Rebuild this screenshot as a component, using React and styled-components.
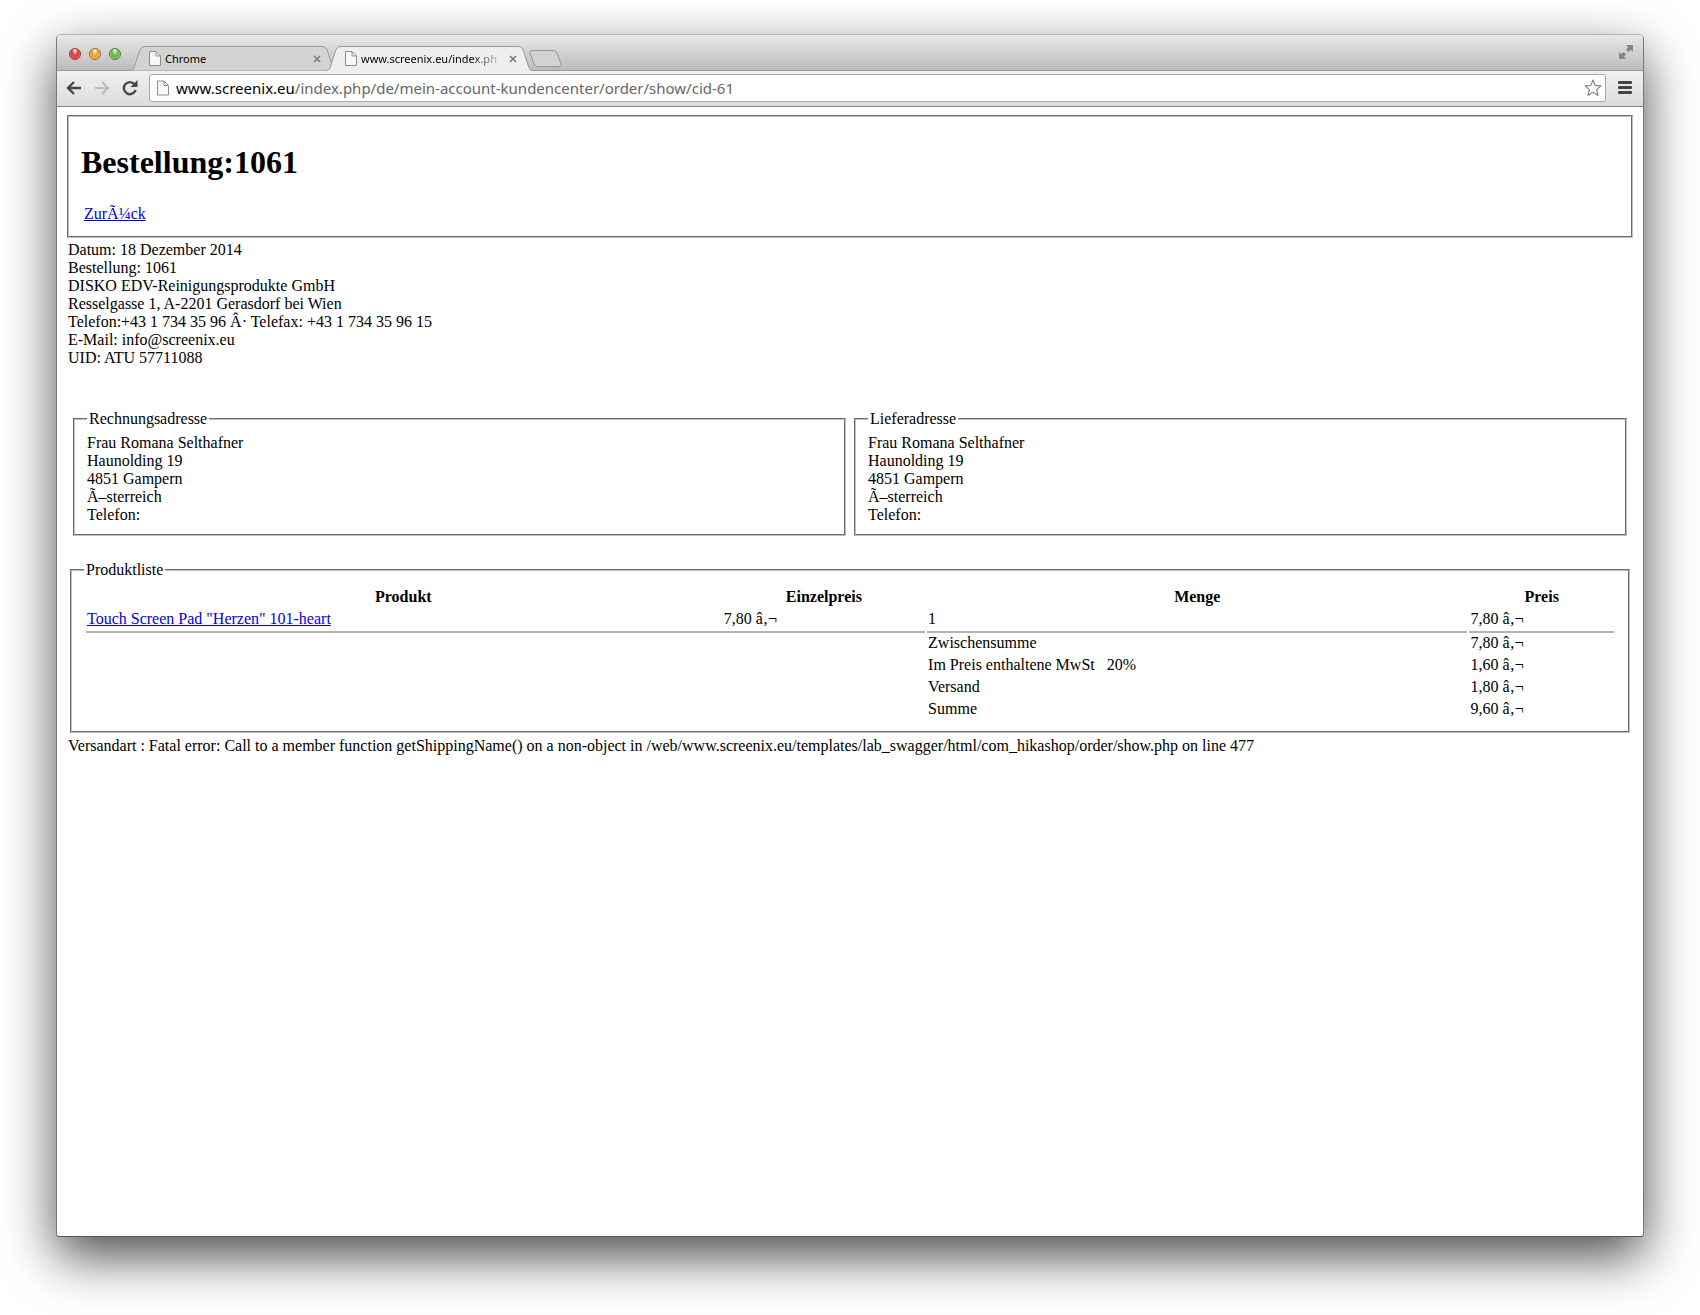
import React from "react";
import styled, { createGlobalStyle } from "styled-components";

const Global = createGlobalStyle`
  *, *::before, *::after { box-sizing: border-box; }
  body { margin: 0; background: #fff; }
`;

const Desktop = styled.div`
  min-height: 100vh;
  padding: 34px 56px 78px;
  display: flex;
  background: #fff;
`;

const BrowserWindow = styled.div`
  flex: 1;
  min-width: 0;
  display: flex;
  flex-direction: column;
  border: 1px solid #777;
  border-top-color: #b4b4b4;
  border-bottom-color: #555;
  border-radius: 5px 5px 3px 3px;
  background: #fff;
  box-shadow: 0 20px 52px rgba(0, 0, 0, 0.7);
`;

const TitleBar = styled.div`
  height: 36px;
  display: flex;
  align-items: flex-end;
  padding: 0 10px 0 12px;
  border-radius: 4px 4px 0 0;
  border-bottom: 1px solid #999;
  background: linear-gradient(#e8e8e8, #bcbcbc);
`;

const Lights = styled.div`
  display: flex;
  gap: 8px;
  margin-bottom: 10px;
`;

const Light = styled.button`
  width: 12px;
  height: 12px;
  padding: 0;
  border: 1px solid ${(p) => p.$edge};
  border-radius: 50%;
  background: radial-gradient(ellipse at 50% 15%, #fff 0, ${(p) => p.$fill} 40%, ${(p) => p.$fill} 60%, ${(p) => p.$glow} 100%);
`;

const Tabs = styled.div`
  display: flex;
  align-items: flex-end;
  margin-left: 10px;
`;

const Tab = styled.div`
  position: relative;
  width: 205px;
  height: 25px;
  margin-right: -9px;
  margin-bottom: -1px;
  padding: 0 15px 0 18px;
  display: flex;
  align-items: center;
  gap: 4px;
  z-index: ${(p) => (p.$active ? 2 : 1)};
  font: 11px/16px "Noto Sans", sans-serif;
  color: #000;
`;

const TabShape = styled.svg`
  position: absolute;
  inset: 0;
  width: 100%;
  height: 100%;
`;

const TabTitle = styled.span`
  position: relative;
  flex: 1;
  min-width: 0;
  overflow: hidden;
  white-space: nowrap;
  ${(p) => p.$fade && "mask-image: linear-gradient(90deg, #000 76%, transparent);"}
`;

const IconButton = styled.button`
  position: relative;
  flex: none;
  display: flex;
  padding: 0;
  border: 0;
  background: none;
`;

const PageIcon = styled.svg`
  position: relative;
  flex: none;
`;

const NewTab = styled(IconButton)`
  margin: 0 0 3px 6px;
`;

const FullScreen = styled(IconButton)`
  margin: 0 0 11px auto;
`;

const Toolbar = styled.div`
  height: 36px;
  display: flex;
  align-items: center;
  padding: 0 11px 1px 9px;
  border-bottom: 1px solid #858585;
  background: linear-gradient(#f0f0f0, #dcdcdc);
`;

const Nav = styled.div`
  display: flex;
  gap: 12px;
`;

const AddressBar = styled.div`
  position: relative;
  flex: 1;
  height: 28px;
  margin: 0 12px 0 11px;
  padding: 0 3px 0 7px;
  display: flex;
  align-items: center;
  gap: 7px;
  border: 1px solid #a8a8a8;
  border-radius: 3px;
  background: #fff;
`;

const Address = styled.a`
  flex: 1;
  font: 15px/20px "Noto Sans", sans-serif;
  color: #666;
  text-decoration: none;
  white-space: nowrap;
`;

const Host = styled.span`
  color: #000;
`;

const Page = styled.main`
  flex: 1;
  padding: 8px;
  font: 16px/18px "Liberation Serif", "Times New Roman", serif;
  color: #000;
`;

const Group = styled.fieldset`
  min-width: 0;
  margin: 0;
  padding: 6px 12px 10px;
  border: 2px groove #c0c0c0;
`;

const Heading = styled(Group)`
  margin: 0 2px;
`;

const Title = styled.h1`
  margin: 21px 0 25px;
  font-size: 32px;
  line-height: 36px;
`;

const Link = styled.a`
  color: #0000ee;
`;

const BackRow = styled.div`
  padding: 0 3px 3px;
`;

const Sender = styled.div`
  margin: 3px 3px 0;
`;

const Addresses = styled.div`
  display: grid;
  grid-template-columns: 1fr 1fr;
  gap: 8px;
  margin: 43px 8px 25px;
`;

const Products = styled(Group)`
  margin: 0 5px;
`;

const Legend = styled.legend`
  padding: 0 2px;
`;

const Table = styled.table`
  width: 100%;
  border-collapse: separate;
  border-spacing: 2px;
  table-layout: fixed;
`;

const Col = styled.col`
  width: ${(p) => p.$w};
`;

const Th = styled.th`
  padding: 1px;
`;

const Td = styled.td`
  padding: 1px;
  white-space: pre;
`;

/* The rule is drawn over the spacing below the row; $bridge carries it across to the next cell. */
const RuledTd = styled(Td)`
  position: relative;
  padding-bottom: 3px;

  &::after {
    content: "";
    position: absolute;
    left: 0;
    right: ${(p) => (p.$bridge ? "-2px" : "0")};
    bottom: -2px;
    height: 2px;
    background: #b4b4b4;
  }
`;

const ErrorLine = styled.div`
  margin: 4px 3px 0;
`;

const sender = [
  "Datum: 18 Dezember 2014",
  "Bestellung: 1061",
  "DISKO EDV-Reinigungsprodukte GmbH",
  "Resselgasse 1, A-2201 Gerasdorf bei Wien",
  "Telefon:+43 1 734 35 96 Â· Telefax: +43 1 734 35 96 15",
  "E-Mail: info@screenix.eu",
  "UID: ATU 57711088",
];

const customer = ["Frau Romana Selthafner", "Haunolding 19", "4851 Gampern", "Ã–sterreich", "Telefon:"];

const totals = [
  ["Zwischensumme", "7,80 â‚¬"],
  ["Im Preis enthaltene MwSt   20%", "1,60 â‚¬"],
  ["Versand", "1,80 â‚¬"],
  ["Summe", "9,60 â‚¬"],
];

const Doc = ({ w = 12, h = 15 }) => (
  <PageIcon width={w} height={h} viewBox="0 0 12 15">
    <path d="M.5.5h6.5l4.500 4.500v9.500H.5z" fill="#f8f8f8" stroke="#8c8c8c" />
    <path d="M7 .5V5h4.500" fill="none" stroke="#8c8c8c" />
  </PageIcon>
);

function BrowserTab({ title, active }) {
  const fill = active ? "#efefef" : "#d3d3d3";
  return (
    <Tab $active={active}>
      <TabShape viewBox="0 0 205 25">
        <path
          d="M0 24.500C2.500 24.500 3 22 4 19L8.500 5Q10 .5 14 .5H191Q195 .5 196.500 5L201 19Q202.500 24.500 205 24.500"
          fill={fill}
          stroke="#999"
        />
        {active && <path d="M1 24.500H204" stroke="#efefef" />}
      </TabShape>
      <Doc />
      <TabTitle $fade={active}>{title}</TabTitle>
      <IconButton aria-label="Tab schließen">
        <svg width="8" height="8" viewBox="0 0 8 8">
          <path d="M1 1l6 6M7 1L1 7" stroke="#777" strokeWidth="1.500" />
        </svg>
      </IconButton>
    </Tab>
  );
}

function AddressBox({ title }) {
  return (
    <Group>
      <Legend>{title}</Legend>
      {customer.map((line) => (
        <div key={line}>{line}</div>
      ))}
    </Group>
  );
}

export default function App() {
  return (
    <Desktop>
      <Global />
      <BrowserWindow>
        <TitleBar>
          <Lights>
            <Light aria-label="Schließen" $edge="#8d3b3b" $fill="#e2403f" $glow="#ff9c98" />
            <Light aria-label="Minimieren" $edge="#94682e" $fill="#eda33a" $glow="#ffe58a" />
            <Light aria-label="Zoomen" $edge="#4f7a3a" $fill="#75b84e" $glow="#cdf5a4" />
          </Lights>
          <Tabs>
            <BrowserTab title="Chrome" />
            <BrowserTab title="www.screenix.eu/index.ph" active />
          </Tabs>
          <NewTab aria-label="Neuer Tab">
            <svg width="33" height="17" viewBox="0 0 33 17">
              <path d="M3 .5H24Q27 .5 28 3L32 14Q32.500 16.500 30 16.500H9Q6 16.500 5 14L1 3Q.5.5 3 .5Z" fill="#d2d2d2" stroke="#999" />
            </svg>
          </NewTab>
          <FullScreen aria-label="Vollbild">
            <svg width="14" height="14" viewBox="0 0 14 14" fill="#858585">
              <path d="M7 0h7v7l-2.200-2.200-2.300 2.300-2.600-2.600 2.300-2.300zM0 7l2.200 2.200 2.300-2.300 2.600 2.600-2.300 2.300L7 14H0z" />
            </svg>
          </FullScreen>
        </TitleBar>
        <Toolbar>
          <Nav>
            <IconButton aria-label="Zurück">
              <svg width="16" height="16" viewBox="0 0 16 16" fill="none" stroke="#484848" strokeWidth="2.400">
                <path d="M8 2L2 8l6 6M2 8h13" />
              </svg>
            </IconButton>
            <IconButton aria-label="Vorwärts">
              <svg width="16" height="16" viewBox="0 0 16 16" fill="none" stroke="#bcbcbc" strokeWidth="2.200">
                <path d="M8 2l6 6-6 6M14 8H1" />
              </svg>
            </IconButton>
            <IconButton aria-label="Neu laden">
              <svg width="16" height="16" viewBox="0 0 16 16">
                <path d="M12.500 4.300A6 6 0 1 0 13.600 10" fill="none" stroke="#484848" strokeWidth="2.400" />
                <path d="M15.500 0v7H8.500z" fill="#484848" />
              </svg>
            </IconButton>
          </Nav>
          <AddressBar>
            <Doc w={12} h={16} />
            <Address href="#order">
              <Host>www.screenix.eu</Host>/index.php/de/mein-account-kundencenter/order/show/cid-61
            </Address>
            <IconButton aria-label="Lesezeichen">
              <svg width="18" height="18" viewBox="0 0 18 18" fill="#fff" stroke="#888" strokeWidth="1.200" strokeLinejoin="round">
                <path d="M9 1l2.200 5.400 5.800.4-4.400 3.800 1.400 5.900L9 13.300 4 16.500l1.400-5.900L1 6.800l5.800-.4z" />
              </svg>
            </IconButton>
          </AddressBar>
          <IconButton aria-label="Menü">
            <svg width="14" height="14" viewBox="0 0 14 14" fill="#444">
              <rect y="0" width="14" height="3" rx="1" />
              <rect y="5" width="14" height="3" rx="1" />
              <rect y="10" width="14" height="3" rx="1" />
            </svg>
          </IconButton>
        </Toolbar>
        <Page>
          <Heading>
            <Title>Bestellung:1061</Title>
            <BackRow>
              <Link href="#back">ZurÃ¼ck</Link>
            </BackRow>
          </Heading>
          <Sender>
            {sender.map((line) => (
              <div key={line}>{line}</div>
            ))}
          </Sender>
          <Addresses>
            <AddressBox title="Rechnungsadresse" />
            <AddressBox title="Lieferadresse" />
          </Addresses>
          <Products>
            <Legend>Produktliste</Legend>
            <Table>
              <colgroup>
                <Col $w="41.7%" />
                <Col $w="13.3%" />
                <Col $w="35.5%" />
                <Col $w="9.5%" />
              </colgroup>
              <thead>
                <tr>
                  <Th>Produkt</Th>
                  <Th>Einzelpreis</Th>
                  <Th>Menge</Th>
                  <Th>Preis</Th>
                </tr>
              </thead>
              <tbody>
                <tr>
                  <RuledTd $bridge>
                    <Link href="#product">Touch Screen Pad "Herzen" 101-heart</Link>
                  </RuledTd>
                  <RuledTd>7,80 â‚¬</RuledTd>
                  <RuledTd>1</RuledTd>
                  <RuledTd>7,80 â‚¬</RuledTd>
                </tr>
                {totals.map(([label, price]) => (
                  <tr key={label}>
                    <Td colSpan={2} />
                    <Td>{label}</Td>
                    <Td>{price}</Td>
                  </tr>
                ))}
              </tbody>
            </Table>
          </Products>
          <ErrorLine>
            Versandart : Fatal error: Call to a member function getShippingName() on a non-object in
            /web/www.screenix.eu/templates/lab_swagger/html/com_hikashop/order/show.php on line 477
          </ErrorLine>
        </Page>
      </BrowserWindow>
    </Desktop>
  );
}
